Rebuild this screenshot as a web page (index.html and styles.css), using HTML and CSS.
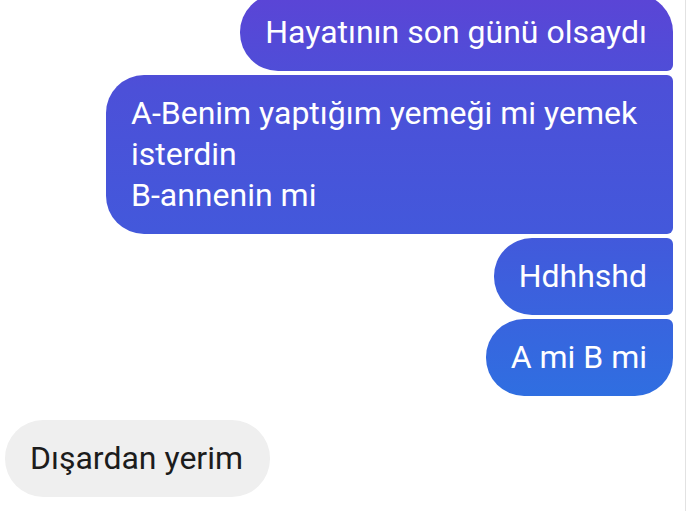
FILE: index.html
```html
<!DOCTYPE html>
<html lang="tr">
<head>
<meta charset="utf-8">
<link rel="stylesheet" href="styles.css">
</head>
<body>
<div class="screen">
  <div class="chat">
    <div class="group outgoing">
      <div class="bubble out first">Hayatının son günü olsaydı</div>
      <div class="bubble out">A-Benim yaptığım yemeği mi yemek isterdin<br>B-annenin mi</div>
      <div class="bubble out">Hdhhshd</div>
      <div class="bubble out last">A mi B mi</div>
    </div>
    <div class="group incoming">
      <div class="bubble in">Dışardan yerim</div>
    </div>
  </div>
</div>
</body>
</html>
```
FILE: styles.css
```css
html, body {
  margin: 0;
  padding: 0;
  background: #ffffff;
}
body {
  font-family: Roboto, "Noto Sans", sans-serif;
  width: 690px;
  height: 511px;
  overflow: hidden;
}
.screen {
  width: 685px;
  height: 511px;
  border-right: 1px solid #e2e2e2;
  overflow: hidden;
}
.chat {
  margin-top: -6px;
  padding-right: 12px;
  padding-left: 5px;
  display: flex;
  flex-direction: column;
  gap: 24px;
}
.group {
  display: flex;
  flex-direction: column;
  gap: 4px;
}
.outgoing {
  align-items: flex-end;
}
.incoming {
  align-items: flex-start;
}
.bubble {
  box-sizing: border-box;
  font-size: 32px;
  line-height: 41px;
  padding: 18px 26px 18px 25px;
  max-width: 567px;
}
.out {
  color: #ffffff;
  background: linear-gradient(180deg, #5a45d6 0px, #4c50d8 90px, #4358db 230px, #2f6fe1 400px);
  background-attachment: fixed;
  border-radius: 38px 6px 6px 38px;
}
.out.first {
  border-top-right-radius: 38px;
}
.out.last {
  border-bottom-right-radius: 38px;
}
.in {
  color: #1c1c1c;
  background: #efefef;
  border-radius: 38px;
  padding-left: 25px;
  padding-right: 27px;
}
```
